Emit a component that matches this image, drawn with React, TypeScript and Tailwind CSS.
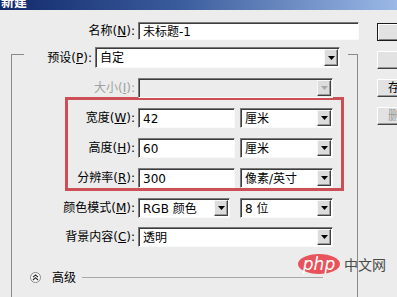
import React from "react";

const FONT = { fontFamily: '"DejaVu Sans", "Noto Sans CJK SC", sans-serif' };

function Arrow({ disabled }: { disabled?: boolean }) {
  return (
    <div className="my-[1px] mr-[1px] flex w-[14px] shrink-0 items-center justify-center border border-t-[#f8f8f8] border-l-[#f8f8f8] border-b-[#404040] border-r-[#404040] bg-[#dcdcdc] shadow-[inset_-1px_-1px_0_#9a9a9a]">
      <svg width="7" height="4" viewBox="0 0 7 4">
        <path d="M0 0h7L3.5 4z" fill={disabled ? "#a8a8a8" : "#000"} />
      </svg>
    </div>
  );
}

function Box({
  className,
  text,
  arrow,
  disabled,
}: {
  className: string;
  text?: React.ReactNode;
  arrow?: boolean;
  disabled?: boolean;
}) {
  return (
    <div
      className={
        "flex shrink-0 items-stretch border border-t-[#7a7a7a] border-l-[#7a7a7a] border-b-[#fafafa] border-r-[#fafafa] shadow-[inset_1px_1px_0_#3c3c3c] " +
        (disabled ? "bg-[#ececec] " : "bg-white ") +
        className
      }
    >
      <div className="flex flex-1 items-center overflow-hidden whitespace-nowrap pl-[4px] pt-[1px] text-[12px] text-black">
        {text}
      </div>
      {arrow && <Arrow disabled={disabled} />}
    </div>
  );
}

function Label({ className, children }: { className: string; children: React.ReactNode }) {
  return (
    <div className={"shrink-0 whitespace-nowrap pr-[3px] text-right text-[12px] " + className}>
      {children}
    </div>
  );
}

function Btn({ children, def, disabled }: { children?: React.ReactNode; def?: boolean; disabled?: boolean }) {
  return (
    <div
      className={
        "flex h-[18px] w-[90px] items-center whitespace-nowrap bg-[#e2e2e2] pl-[10px] text-[12px] " +
        (def
          ? "border border-[#1a1a1a] shadow-[inset_1px_1px_0_#ffffff,inset_-1px_-1px_0_#808080] "
          : "border border-t-white border-l-white border-b-[#404040] border-r-[#404040] shadow-[inset_-1px_-1px_0_#9a9a9a] ") +
        (disabled ? "text-[#9a9a9a]" : "text-black")
      }
    >
      {children}
    </div>
  );
}

export default function App() {
  return (
    <div
      className="relative h-[297px] w-[397px] overflow-hidden bg-[#ececec] text-black"
      style={FONT}
    >
      {/* title bar */}
      <div className="h-[10px] overflow-hidden bg-[linear-gradient(90deg,#12296a_0%,#3a5c9c_45%,#9bb8e6_100%)]">
        <div className="-mt-[6px] pl-[1px] text-[13px] font-bold leading-[16px] text-white">新建</div>
      </div>

      <div className="flex">
        {/* main */}
        <div className="w-[377px] shrink-0">
          <div className="mt-[12px] flex h-[18px] items-center">
            <Label className="w-[138px]">
              名称(<u>N</u>):
            </Label>
            <Box className="h-[18px] w-[221px]" text="未标题-1" />
          </div>

          <div className="ml-[11px] mt-[14px] h-[260px] w-[347px] border-t border-l border-r border-[#8a8a8a]">
            {/* legend row */}
            <div className="-mt-[8px] ml-[12px] flex h-[21px] w-[324px] items-center bg-[#ececec]">
              <Label className="w-[71px]">
                预设(<u>P</u>):
              </Label>
              <Box className="h-[21px] w-[245px]" text="自定" arrow />
            </div>

            <div className="mt-[10px] flex h-[20px] items-center">
              <Label className="w-[126px] text-[#a0a0a0]">
                大小(<u>I</u>):
              </Label>
              <Box className="h-[20px] w-[195px]" arrow disabled />
            </div>

            {/* red highlight */}
            <div className="-mt-[1px] ml-[53px] flex w-[279px] flex-col gap-[10px] border-[3px] border-[#cc4f55] pt-[8px]">
              <div className="flex h-[20px] items-center">
                <Label className="w-[70px]">
                  宽度(<u>W</u>):
                </Label>
                <Box className="h-[20px] w-[97px]" text="42" />
                <Box className="ml-[5px] h-[20px] w-[93px]" text="厘米" arrow />
              </div>
              <div className="flex h-[20px] items-center">
                <Label className="w-[70px]">
                  高度(<u>H</u>):
                </Label>
                <Box className="h-[20px] w-[97px]" text="60" />
                <Box className="ml-[5px] h-[20px] w-[93px]" text="厘米" arrow />
              </div>
              <div className="flex h-[20px] items-center">
                <Label className="w-[70px]">
                  分辨率(<u>R</u>):
                </Label>
                <Box className="h-[20px] w-[97px]" text="300" />
                <Box className="ml-[5px] h-[20px] w-[93px]" text="像素/英寸" arrow />
              </div>
            </div>

            <div className="mt-[7px] flex h-[20px] items-center">
              <Label className="w-[126px]">
                颜色模式(<u>M</u>):
              </Label>
              <Box className="h-[20px] w-[92px]" text="RGB 颜色" arrow />
              <Box className="ml-[10px] h-[20px] w-[93px]" text="8 位" arrow />
            </div>

            <div className="mt-[9px] flex h-[20px] items-center">
              <Label className="w-[126px]">
                背景内容(<u>C</u>):
              </Label>
              <Box className="h-[20px] w-[195px]" text="透明" arrow />
            </div>

            <div className="mt-[24px] flex h-[13px] items-center">
              <div className="ml-[18px] flex h-[11px] w-[11px] items-center justify-center rounded-full border border-[#8a8a8a] bg-[#fafafa]">
                <svg width="7" height="7" viewBox="0 0 7 7">
                  <path d="M1 3.2L3.5 0.9 6 3.2M1 6L3.5 3.7 6 6" fill="none" stroke="#222" strokeWidth="1.1" />
                </svg>
              </div>
              <div className="ml-[11px] text-[12px]">高级</div>
              <div className="ml-[6px] h-px w-[241px] bg-[#a8a8a8]" />
            </div>
          </div>
        </div>

        {/* buttons */}
        <div className="flex shrink-0 flex-col gap-[10px] pt-[13px]">
          <Btn def />
          <Btn />
          <Btn>存储预设(S)...</Btn>
          <Btn disabled>删除预设(D)...</Btn>
        </div>
      </div>

      {/* watermark */}
      <div className="absolute left-[298px] top-[254px] flex items-center">
        <div className="flex h-[20px] w-[42px] items-center justify-center rounded-[50%] bg-[#e8525a]">
          <span className="text-[17px] italic leading-none text-white" style={{ fontFamily: '"DejaVu Sans", sans-serif' }}>
            php
          </span>
        </div>
        <span className="ml-[4px] text-[14px] leading-none text-[#4a4a4a]" style={{ fontFamily: '"Noto Sans CJK SC", sans-serif' }}>
          中文网
        </span>
      </div>
    </div>
  );
}
